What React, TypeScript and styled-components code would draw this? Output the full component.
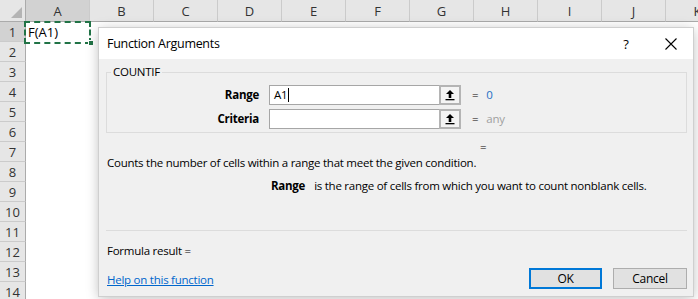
import React from "react";
import styled, { createGlobalStyle } from "styled-components";

const Global = createGlobalStyle`
  html, body { margin: 0; padding: 0; background: #ffffff; }
  body { font-family: "Open Sans", "Noto Sans", sans-serif; }
  * { box-sizing: border-box; }
`;

const Page = styled.div`
  position: relative;
  width: 698px;
  height: 299px;
  overflow: hidden;
  background: #ffffff;
`;

const Sheet = styled.div`
  display: grid;
  grid-template-columns: 26px repeat(11, 64px);
  grid-template-rows: 22px repeat(14, 20px);
`;

const Corner = styled.div`
  position: relative;
  background: #e6e6e6;
  border-right: 1px solid #ababab;
  border-bottom: 1px solid #ababab;
  &::after {
    content: "";
    position: absolute;
    right: 3px;
    bottom: 3px;
    width: 0;
    height: 0;
    border-left: 11px solid transparent;
    border-bottom: 11px solid #b4b4b4;
  }
`;

const ColHead = styled.div<{ $active?: boolean }>`
  display: flex;
  align-items: center;
  justify-content: center;
  background: ${(p) => (p.$active ? "#d2d2d2" : "#e6e6e6")};
  border-right: 1px solid #cbcbcb;
  border-bottom: 1px solid #ababab;
  font-size: 13px;
  color: #333;
  font-family: "Open Sans", sans-serif;
`;

const RowHead = styled.div<{ $active?: boolean }>`
  display: flex;
  align-items: center;
  justify-content: center;
  background: ${(p) => (p.$active ? "#d2d2d2" : "#e6e6e6")};
  border-right: 1px solid #ababab;
  border-bottom: 1px solid #cbcbcb;
  font-size: 13px;
  color: #333;
  font-family: "Open Sans", sans-serif;
`;

const Cell = styled.div`
  position: relative;
  background: #ffffff;
  font-size: 13px;
  line-height: 20px;
  color: #000;
  padding-left: 2px;
  white-space: nowrap;
`;

const Marquee = styled.div`
  position: absolute;
  z-index: 5;
  left: -2px;
  top: -1px;
  right: -1px;
  bottom: -2px;
  border: 2px dashed #217346;
  pointer-events: none;
`;

const FillHandle = styled.div`
  position: absolute;
  z-index: 6;
  right: -4px;
  bottom: -4px;
  width: 6px;
  height: 6px;
  background: #217346;
  border: 1px solid #ffffff;
`;

const Dialog = styled.div`
  position: absolute;
  z-index: 10;
  left: 99px;
  top: 28px;
  width: 594px;
  height: 268px;
  background: #f0f0f0;
  box-shadow: 0 0 0 1px #cfcfcf, 0 2px 12px rgba(0, 0, 0, 0.28);
  display: flex;
  flex-direction: column;
  font-family: "Open Sans", "Noto Sans", sans-serif;
  font-size: 11.5px;
  letter-spacing: -0.25px;
  color: #000;
`;

const TitleBar = styled.div`
  height: 31px;
  background: #ffffff;
  display: flex;
  align-items: center;
  padding-left: 8px;
  flex-shrink: 0;
`;

const Title = styled.div`
  flex: 1;
  font-size: 12.5px;
  letter-spacing: -0.3px;
`;

const HelpGlyph = styled.div`
  width: 20px;
  text-align: center;
  font-size: 13px;
  margin-right: 25px;
`;

const CloseBtn = styled.div`
  width: 20px;
  height: 20px;
  display: flex;
  align-items: center;
  justify-content: center;
  margin-right: 12px;
`;

const Body = styled.div`
  flex: 1;
  display: flex;
  flex-direction: column;
  padding: 0 6px 9px 7px;
`;

const Group = styled.fieldset`
  margin: 5px 0 0 0;
  padding: 5px 0 3px 0;
  border: 1px solid #dcdcdc;
  min-width: 0;
`;

const Legend = styled.legend`
  padding: 0 2px;
  margin-left: 4px;
  font-size: 11.5px;
  line-height: 16px;
`;

const ArgGrid = styled.div`
  display: grid;
  grid-template-columns: 152px 192px auto;
  column-gap: 10px;
  row-gap: 4px;
`;

const ArgLabel = styled.div`
  text-align: right;
  font-weight: 700;
  line-height: 20px;
`;

const InputWrap = styled.div`
  display: flex;
  height: 20px;
`;

const RefInput = styled.div`
  flex: 1;
  background: #ffffff;
  border: 1px solid #a6a6a6;
  border-right: none;
  padding-left: 4px;
  line-height: 18px;
  display: flex;
  align-items: center;
`;

const Caret = styled.span`
  display: inline-block;
  width: 1px;
  height: 14px;
  background: #000;
  margin-left: 1px;
`;

const CollapseBtn = styled.div`
  width: 22px;
  height: 20px;
  background: #f4f4f4;
  border: 2px solid #b4b4b4;
  display: flex;
  align-items: center;
  justify-content: center;
`;

const ArgValue = styled.div<{ $muted?: boolean }>`
  display: flex;
  gap: 8px;
  line-height: 20px;
  padding-left: 1px;
  color: #000;
  span:last-child {
    color: ${(p) => (p.$muted ? "#a0a0a0" : "#1f6fc5")};
  }
`;

const LoneEquals = styled.div`
  margin-top: 6px;
  padding-left: 374px;
  line-height: 16px;
`;

const Description = styled.div`
  margin-top: 0;
  padding-left: 1px;
  line-height: 16px;
`;

const ArgHelp = styled.div`
  margin-top: 7px;
  padding-left: 165px;
  display: flex;
  gap: 9px;
  line-height: 16px;
  b {
    font-weight: 700;
  }
`;

const Separator = styled.div`
  margin-top: 36px;
  height: 1px;
  background: #dcdcdc;
`;

const ResultLine = styled.div`
  margin-top: 12px;
  padding-left: 1px;
  line-height: 16px;
`;

const Footer = styled.div`
  margin-top: 9px;
  display: flex;
  align-items: flex-start;
`;

const HelpLink = styled.a`
  flex: 1;
  margin-top: 4px;
  padding-left: 1px;
  line-height: 16px;
  color: #0066cc;
  text-decoration: underline;
`;

const Button = styled.div<{ $primary?: boolean }>`
  width: ${(p) => (p.$primary ? "73px" : "74px")};
  height: 21px;
  margin-left: ${(p) => (p.$primary ? "0" : "11px")};
  background: #e1e1e1;
  border: ${(p) => (p.$primary ? "2px solid #0078d7" : "1px solid #adadad")};
  display: flex;
  align-items: center;
  justify-content: center;
  font-size: 12px;
`;

const UpArrow = () => (
  <svg width="12" height="12" viewBox="0 0 12 12">
    <path d="M6 1 L10 5 L7.3 5 L7.3 9 L4.7 9 L4.7 5 L2 5 Z" fill="#000" />
    <rect x="1.5" y="10" width="9" height="1.3" fill="#000" />
  </svg>
);

const CloseIcon = () => (
  <svg width="12" height="12" viewBox="0 0 12 12">
    <path d="M0.5 0.5 L11.5 11.5 M11.5 0.5 L0.5 11.5" stroke="#000" strokeWidth="1.1" />
  </svg>
);

const cols = ["A", "B", "C", "D", "E", "F", "G", "H", "I", "J", "K"];
const rows = Array.from({ length: 14 }, (_, i) => i + 1);

export default function App() {
  return (
    <Page>
      <Global />
      <Sheet>
        <Corner />
        {cols.map((c) => (
          <ColHead key={c} $active={c === "A"}>
            {c}
          </ColHead>
        ))}
        {rows.map((r) => (
          <React.Fragment key={r}>
            <RowHead $active={r === 1}>{r}</RowHead>
            {cols.map((c) =>
              r === 1 && c === "A" ? (
                <Cell key={c}>
                  F(A1)
                  <Marquee />
                  <FillHandle />
                </Cell>
              ) : (
                <Cell key={c} />
              )
            )}
          </React.Fragment>
        ))}
      </Sheet>

      <Dialog>
        <TitleBar>
          <Title>Function Arguments</Title>
          <HelpGlyph>?</HelpGlyph>
          <CloseBtn>
            <CloseIcon />
          </CloseBtn>
        </TitleBar>
        <Body>
          <Group>
            <Legend>COUNTIF</Legend>
            <ArgGrid>
              <ArgLabel>Range</ArgLabel>
              <InputWrap>
                <RefInput>
                  A1
                  <Caret />
                </RefInput>
                <CollapseBtn>
                  <UpArrow />
                </CollapseBtn>
              </InputWrap>
              <ArgValue>
                <span>=</span>
                <span>0</span>
              </ArgValue>
              <ArgLabel>Criteria</ArgLabel>
              <InputWrap>
                <RefInput />
                <CollapseBtn>
                  <UpArrow />
                </CollapseBtn>
              </InputWrap>
              <ArgValue $muted>
                <span>=</span>
                <span>any</span>
              </ArgValue>
            </ArgGrid>
          </Group>
          <LoneEquals>=</LoneEquals>
          <Description>
            Counts the number of cells within a range that meet the given condition.
          </Description>
          <ArgHelp>
            <b>Range</b>
            <span>is the range of cells from which you want to count nonblank cells.</span>
          </ArgHelp>
          <Separator />
          <ResultLine>Formula result =</ResultLine>
          <Footer>
            <HelpLink>Help on this function</HelpLink>
            <Button $primary>OK</Button>
            <Button>Cancel</Button>
          </Footer>
        </Body>
      </Dialog>
    </Page>
  );
}
